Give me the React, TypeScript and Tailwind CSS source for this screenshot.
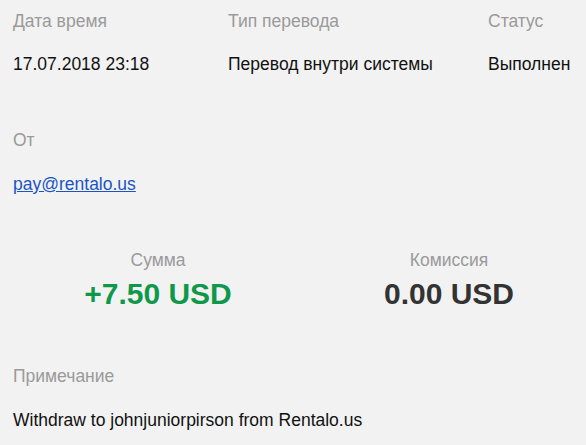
import { FC } from "react";

const Label: FC<{ children: React.ReactNode; className?: string }> = ({ children, className = "" }) => (
  <div className={`text-[#9a9a9a] text-[17.5px] leading-[20px] ${className}`}>{children}</div>
);

const Value: FC<{ children: React.ReactNode; className?: string }> = ({ children, className = "" }) => (
  <div className={`text-[#111] text-[17.5px] leading-[20px] ${className}`}>{children}</div>
);

export default function App() {
  return (
    <div
      className="w-[586px] h-[445px] bg-[#f2f2f2] overflow-hidden pl-[13px] pt-[11px]"
      style={{ fontFamily: '"Liberation Sans", Arial, sans-serif' }}
    >
      <div className="grid grid-cols-[215px_260px_1fr]">
        <Label>Дата время</Label>
        <Label>Тип перевода</Label>
        <Label>Статус</Label>
        <Value className="mt-[23px]">17.07.2018 23:18</Value>
        <Value className="mt-[23px]">Перевод внутри системы</Value>
        <Value className="mt-[23px]">Выполнен</Value>
      </div>

      <Label className="mt-[56px]">От</Label>
      <div className="mt-[24px] text-[17.5px] leading-[20px]">
        <a href="#" className="text-[#1b55c4] underline">pay@rentalo.us</a>
      </div>

      <div className="grid grid-cols-[290px_292px] mt-[56px]">
        <div className="flex flex-col items-center">
          <Label>Сумма</Label>
          <div className="mt-[7px] text-[30px] leading-[34px] font-bold text-[#10984a]">+7.50 USD</div>
        </div>
        <div className="flex flex-col items-center">
          <Label>Комиссия</Label>
          <div className="mt-[7px] text-[30px] leading-[34px] font-bold text-[#333]">0.00 USD</div>
        </div>
      </div>

      <Label className="mt-[55px]">Примечание</Label>
      <Value className="mt-[24px]">Withdraw to johnjuniorpirson from Rentalo.us</Value>
    </div>
  );
}
